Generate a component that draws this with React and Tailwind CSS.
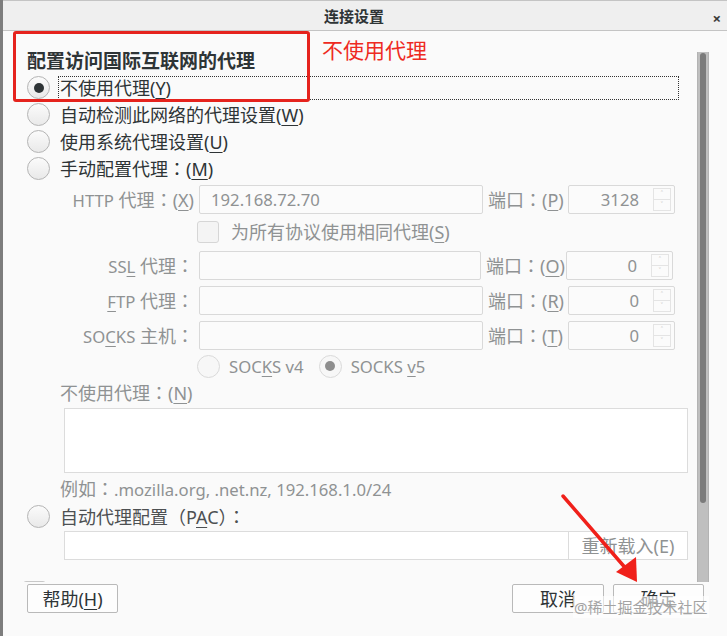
import React from "react";

const DARK = "text-[#2e3436]";
const DIS = "text-[#8f9293]";

function Radio({ checked, disabled }) {
  return (
    <span
      className={`w-[23px] h-[23px] rounded-full border flex items-center justify-center shrink-0 ${
        disabled
          ? "border-[#dadada] bg-[#f7f7f7]"
          : "border-[#b4b4b4] bg-linear-to-b from-[#fbfbfb] to-[#e9e9e9]"
      }`}
    >
      {checked && (
        <span
          className={`w-[10px] h-[10px] rounded-full ${
            disabled ? "bg-[#8e8e8e]" : "bg-[#2e3436]"
          }`}
        />
      )}
    </span>
  );
}

function U({ children }) {
  return <span className="underline underline-offset-[3px] decoration-1">{children}</span>;
}

function C() {
  return <span className="font-['Noto_Sans_CJK_TC',sans-serif]">：</span>;
}

function L({ children }) {
  return <span className="text-[16.7px]">{children}</span>;
}

function TextInput({ value, w = "w-[284px]" }) {
  return (
    <div
      className={`${w} h-[29px] border border-[#d9d9d9] bg-[#fbfbfb] rounded-[2px] flex items-center px-[11px] ${DIS}`}
    >
      <L>{value}</L>
    </div>
  );
}

function Spin({ value }) {
  return (
    <div className="w-[107px] h-[29px] border border-[#d9d9d9] bg-[#fbfbfb] rounded-[2px] flex items-center">
      <div className={`flex-1 text-right pr-[14px] ${DIS}`}>
        <L>{value}</L>
      </div>
      <div className="w-[18px] h-[23px] mr-[3px] border border-[#e4e4e4] flex flex-col">
        <div className="flex-1 flex items-center justify-center text-[8px] leading-none text-[#c8c8c8] border-b border-[#e4e4e4]">
          ˄
        </div>
        <div className="flex-1 flex items-center justify-center text-[8px] leading-none text-[#c8c8c8]">
          ˅
        </div>
      </div>
    </div>
  );
}

function ProxyRow({ label, portLabel, value, port, mt, inputW }) {
  return (
    <div className={`flex items-center h-[29px] ${mt}`}>
      <div className={`w-[196px] shrink-0 text-right pr-[5px] ${DIS}`}>{label}</div>
      <TextInput value={value} w={inputW} />
      <div className={`ml-[5px] w-[80px] shrink-0 ${DIS}`}>{portLabel}</div>
      <Spin value={port} />
    </div>
  );
}

function Button({ children, w }) {
  return (
    <div
      className={`${w} h-[29px] border border-[#b9b9b9] rounded-[2px] bg-[#fdfdfd] flex items-center justify-center ${DARK}`}
    >
      {children}
    </div>
  );
}

export default function App() {
  return (
    <div className="w-[727px] h-[636px] relative overflow-hidden bg-[#fafafa] font-['Noto_Sans','Noto_Sans_CJK_SC',sans-serif] text-[18px] leading-[24px] border-l-[3px] border-[#7d7d7d]">
      {/* title bar */}
      <div className="h-[31px] bg-[#efefef] border-t border-[#8c8c8c] border-b border-[#c4c4c4] flex items-center justify-center relative">
        <span className={`text-[15px] font-bold ${DARK} mr-[22px]`}>连接设置</span>
        <span className="absolute right-[6px] top-[5px] text-[15px] font-bold text-[#3a3a3a]">×</span>
      </div>

      {/* scroll area: content column + scrollbar column */}
      <div className="flex h-[551px] overflow-hidden">
        <div className="w-[694px] shrink-0 pt-[17px]">
          <div className={`h-[26px] pl-[24px] text-[19px] font-bold leading-[26px] ${DARK}`}>
            配置访问国际互联网的代理
          </div>
          <div className="h-[27px] flex items-center pl-[24px]">
            <Radio checked />
            <div className={`ml-[8px] h-[24px] w-[621px] border border-dotted border-[#333] pl-[1px] leading-[22px] ${DARK}`}>
              不使用代理(<U>Y</U>)
            </div>
          </div>
          <div className="h-[27px] flex items-center pl-[24px] gap-[10px]">
            <Radio />
            <span className={DARK}>自动检测此网络的代理设置(<U>W</U>)</span>
          </div>
          <div className="h-[27px] flex items-center pl-[24px] gap-[10px]">
            <Radio />
            <span className={DARK}>使用系统代理设置(<U>U</U>)</span>
          </div>
          <div className="h-[27px] flex items-center pl-[24px] gap-[10px]">
            <Radio />
            <span className={DARK}>
              手动配置代理<C />(<U>M</U>)
            </span>
          </div>

          <ProxyRow
            label={<><L>HTTP</L> 代理<C />(<U>X</U>)</>}
            portLabel={<>端口<C />(<U>P</U>)</>}
            value="192.168.72.70"
            port="3128"
            mt="mt-[3px]"
          />
          <div className="h-[22px] mt-[7px] flex items-center pl-[194px] gap-[12px]">
            <span className="w-[22px] h-[22px] border border-[#d6d6d6] bg-[#f4f4f4] rounded-[3px]" />
            <span className={DIS}>为所有协议使用相同代理(<U>S</U>)</span>
          </div>
          <ProxyRow
            label={<><L>SS<U>L</U></L> 代理<C /></>}
            portLabel={<>端口<C />(<U>O</U>)</>}
            value=""
            port="0"
            mt="mt-[8px]"
            inputW="w-[282px]"
          />
          <ProxyRow
            label={<><L><U>F</U>TP</L> 代理<C /></>}
            portLabel={<>端口<C />(<U>R</U>)</>}
            value=""
            port="0"
            mt="mt-[6px]"
          />
          <ProxyRow
            label={<><L>SO<U>C</U>KS</L> 主机<C /></>}
            portLabel={<>端口<C />(<U>T</U>)</>}
            value=""
            port="0"
            mt="mt-[6px]"
          />
          <div className="h-[22px] mt-[5px] flex items-center pl-[194px]">
            <Radio disabled />
            <span className={`ml-[9px] ${DIS}`}>
              <L>SOC<U>K</U>S v4</L>
            </span>
            <span className="ml-[15px]" />
            <Radio checked disabled />
            <span className={`ml-[9px] ${DIS}`}>
              <L>SOCKS <U>v</U>5</L>
            </span>
          </div>
          <div className={`h-[24px] mt-[3px] pl-[57px] ${DIS}`}>
            不使用代理<C />(<U>N</U>)
          </div>
          <div className="ml-[61px] mt-[4px] w-[624px] h-[65px] border border-[#dcdcdc] bg-white" />
          <div className={`h-[24px] mt-[3px] pl-[57px] ${DIS}`}>
            例如<C />
            <L>.mozilla.org, .net.nz, 192.168.1.0/24</L>
          </div>
          <div className="h-[24px] mt-[4px] flex items-center pl-[24px] gap-[10px]">
            <Radio />
            <span className="text-[#4d5052]">
              自动代理配置（P<U>A</U>C）<C />
            </span>
          </div>
          <div className="ml-[61px] mt-[3px] w-[624px] h-[29px] border border-[#dcdcdc] bg-white flex justify-end">
            <div className={`w-[119px] h-full border-l border-[#dcdcdc] flex items-center justify-center ${DIS}`}>
              重新载入(E)
            </div>
          </div>
          <div className="h-[28px] mt-[18px] flex items-center pl-[20px]">
            <span className="w-[23px] h-[23px] border border-[#c8c8c8] bg-[#f4f4f4] rounded-[3px]" />
          </div>
        </div>

        {/* scrollbar column */}
        <div className="shrink-0 w-[12px] pt-[21px] flex flex-col">
          <div className="flex-1 flex justify-center pt-[1px] bg-[#bfbfbf] border-x border-[#b3b3b3]">
            <div className="w-[6px] h-[450px] bg-[#7b7b7b] rounded-[3px]" />
          </div>
        </div>
      </div>

      {/* bottom buttons */}
      <div className="flex items-start pt-[2px] pl-[24px] pr-[23px]">
        <Button w="w-[91px]">帮助(<U>H</U>)</Button>
        <div className="flex-1" />
        <div className="flex gap-[9px]">
          <Button w="w-[92px]">取消</Button>
          <Button w="w-[91px]">确定</Button>
        </div>
      </div>

      {/* annotation overlays */}
      <div className="absolute left-[10px] top-[31px] w-[297px] h-[71px] border-[3px] border-[#e5231d] rounded-[3px]" />
      <div className="absolute left-[319px] top-[38px] text-[21px] leading-[24px] text-[#ee2a22]">
        不使用代理
      </div>
      <svg className="absolute left-0 top-0" width="727" height="636" viewBox="0 0 727 636">
        <line x1="560" y1="496" x2="625" y2="571" stroke="#f0201a" strokeWidth="3.5" strokeLinecap="round" />
        <polygon points="634,582 613,572 633,557" fill="#f0201a" />
      </svg>
      <div className="absolute left-[570px] top-[596px] h-[22px] px-[1px] bg-[#ffffff]/60 text-[15px] leading-[22px] text-[#a3a3a3]">
        @稀土掘金技术社区
      </div>
    </div>
  );
}
